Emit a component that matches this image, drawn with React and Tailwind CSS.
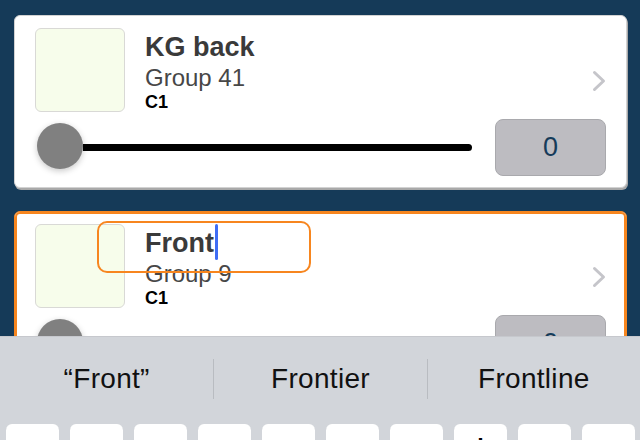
const Chevron = () => (
  <svg width="14" height="22" viewBox="0 0 14 22" fill="none">
    <path d="M2.5 2.5 L11.5 11 L2.5 19.5" stroke="#c5c5ca" strokeWidth="3" strokeLinecap="round" strokeLinejoin="round" />
  </svg>
);

const Card = ({ title, group, active }) => {
  return (
    <div
      className={
        active
          ? "relative rounded-md bg-white px-5 pt-3 pb-[11px] border border-[#f7861f] shadow-[inset_0_0_0_2px_#f7861f]"
          : "relative rounded-md bg-white px-5 pt-3 pb-[11px] border border-[#d2d2d2] shadow-[1px_2px_0_#a9a9a9]"
      }
    >
      <div className="flex">
        <div className="w-[90px] h-[84px] shrink-0 rounded-md border border-[#d9d9d6] bg-[#f7fdeb]" />
        <div className="ml-5 mt-[5px] flex-1 flex flex-col">
          <div className="text-[27px] leading-[29px] font-bold text-[#3a3a3a]">
            {title}
            {active && (
              <span className="relative inline-block w-[3px] h-0 ml-[1px]">
                <span className="absolute left-0 -top-[28px] w-[3px] h-[36px] rounded-full bg-[#3e6df5]" />
              </span>
            )}
          </div>
          <div className="text-[24px] leading-[31px] text-[#474747]">{group}</div>
          <div className="text-[18px] leading-[18px] font-bold text-black">C1</div>
        </div>
        <div className="self-start mt-[42px]">
          <Chevron />
        </div>
      </div>

      <div className="mt-[7px] flex items-center">
        <div className="flex-1 mr-[23px] flex items-center">
          <div className="ml-[2px] mb-1 w-[46px] h-[46px] shrink-0 rounded-full bg-[#808080] shadow-[0_2px_6px_rgba(0,0,0,0.22)]" />
          <div className="flex-1 h-[7px] rounded-r-full bg-black" />
        </div>
        <div className="w-[111px] h-[57px] shrink-0 rounded-lg border border-[#a9a9ad] bg-[#bdbcc1] flex items-center justify-center text-[27px] text-[#163b5a]">
          0
        </div>
      </div>

      {active && (
        <div className="absolute left-[82px] top-[9px] w-[214px] h-[52px] rounded-[10px] border-2 border-[#f7861f]" />
      )}
    </div>
  );
};

const App = () => {
  const suggestions = ["\u201CFront\u201D", "Frontier", "Frontline"];
  const keys = ["q", "w", "e", "r", "t", "y", "u", "i", "o", "p"];

  return (
    <div className="h-[440px] w-full flex flex-col overflow-hidden bg-[#153a58] font-['Liberation_Sans',Arial,sans-serif]">
      <div className="h-[336px] shrink-0 overflow-hidden pt-[15px] pl-[14px] pr-[13px] flex flex-col gap-[23px]">
        <Card title="KG back" group="Group 41" />
        <Card title="Front" group="Group 9" active />
      </div>

      <div className="flex-1 bg-[#d2d5da] border-t border-[#c6c8cd]">
        <div className="h-[83px] flex items-center">
          {suggestions.map((s, i) => (
            <div key={s} className="flex-1 flex items-center">
              {i > 0 && <div className="w-px h-10 bg-[#b9bcc1]" />}
              <div className="flex-1 text-center text-[28px] leading-[32px] tracking-[0.3px] text-[#111]">{s}</div>
            </div>
          ))}
        </div>
        <div className="mt-[4px] px-[6px] flex gap-[11px]">
          {keys.map((k) => (
            <div
              key={k}
              className="w-[53px] h-[70px] shrink-0 rounded-md bg-white shadow-[0_1px_0_#8a8b8f] pt-[11px] text-center text-[36px] leading-[36px] text-black"
            >
              {k}
            </div>
          ))}
        </div>
      </div>
    </div>
  );
};

export default App;
